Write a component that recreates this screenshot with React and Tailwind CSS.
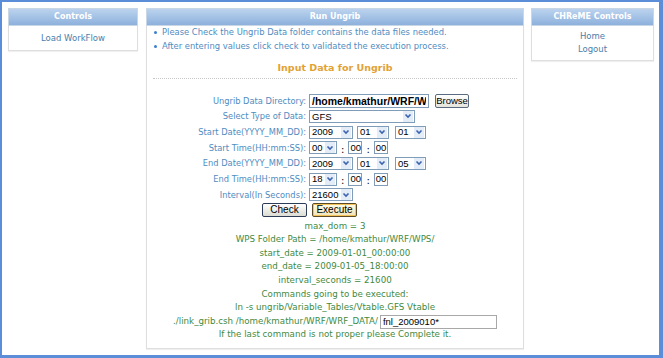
import React from 'react';

const font = { fontFamily: '"DejaVu Sans", Verdana, sans-serif' };

const Chevron = () => (
  <span className="flex items-center justify-center w-[10px] h-[11px] bg-[#e4ecf8] mr-[1px]">
    <svg width="8" height="8" viewBox="0 0 8 8">
      <path d="M1.5 2.5 L4 5 L6.5 2.5" fill="none" stroke="#3b63b0" strokeWidth="1.6" />
    </svg>
  </span>
);

function FakeSelect({ value, className }) {
  return (
    <span className={`inline-flex items-center justify-between h-[13px] border border-[#7f9db9] bg-white text-black text-[9.5px] font-['Liberation_Sans',Arial,sans-serif] ${className}`}>
      <span className="pl-[2px] leading-none">{value}</span>
      <Chevron />
    </span>
  );
}

function TinyInput({ value }) {
  return (
    <span className="inline-flex items-center h-[13px] w-[14px] border border-[#7f9db9] bg-white text-black text-[9.5px] font-['Liberation_Sans',Arial,sans-serif] pl-[1px] leading-none">
      {value}
    </span>
  );
}

const Colon = () => <span className="text-black text-[10px] leading-none">:</span>;

function Panel({ title, className, children }) {
  return (
    <div className={`flex flex-col ${className}`}>
      <div className="h-[18px] flex items-center justify-center bg-gradient-to-b from-[#bcd3ee] to-[#8db1dc] text-white font-bold text-[8px] border border-[#c8d6e6]">
        {title}
      </div>
      <div className="border-x border-b border-[#dedede] bg-white shadow-[0_1px_1px_rgba(0,0,0,0.06)]">
        {children}
      </div>
    </div>
  );
}

function FormRow({ label, children }) {
  return (
    <div className="flex items-center h-[15.67px]">
      <div className="w-[162px] pr-[3px] text-right text-[#4f8cbf] text-[8.3px] leading-none whitespace-nowrap">{label}</div>
      <div className="flex items-center">{children}</div>
    </div>
  );
}

const outputs = [
  'max_dom = 3',
  'WPS Folder Path = /home/kmathur/WRF/WPS/',
  'start_date = 2009-01-01_00:00:00',
  'end_date = 2009-01-05_18:00:00',
  'interval_seconds = 21600',
  'Commands going to be executed:',
  'ln -s ungrib/Variable_Tables/Vtable.GFS Vtable',
];

export default function App() {
  return (
    <div style={font} className="w-[663px] h-[358px] bg-[#5b8dd9] pl-[2px] pt-[2px] pr-[4px] pb-[3px]">
      <div className="h-full bg-white flex items-start pl-[6px] pt-[6px] pr-[5px]">
        <Panel title="Controls" className="w-[130px]">
          <div className="h-[24px] flex items-center justify-center text-[8.5px] text-[#4b7eab]">Load WorkFlow</div>
        </Panel>

        <Panel title="Run Ungrib" className="w-[378px] ml-[8px]">
          <div className="h-[322px]">
            <ul className="text-[8.4px] text-[#4f8cbf] leading-[13.5px] whitespace-nowrap">
              <li className="flex items-center pl-[7px] gap-[5px]">
                <span className="w-[3px] h-[3px] rounded-full bg-[#3c7fd0]" />
                Please Check the Ungrib Data folder contains the data files needed.
              </li>
              <li className="flex items-center pl-[7px] gap-[5px]">
                <span className="w-[3px] h-[3px] rounded-full bg-[#3c7fd0]" />
                After entering values click check to validated the execution process.
              </li>
            </ul>
            <div className="mt-[8px] mx-[6px] pb-[3px] border-b border-dotted border-[#c8c8c8] text-center font-bold text-[9.5px] leading-[14px] text-[#e2a233]">
              Input Data for Ungrib
            </div>

            <div className="mt-[14px]">
              <FormRow label="Ungrib Data Directory:">
                <input
                  readOnly
                  value="/home/kmathur/WRF/WRF_DATA/"
                  className="h-[14px] w-[120px] border border-[#7f9db9] bg-white text-black font-bold text-[10.5px] font-['Liberation_Sans',Arial,sans-serif] px-[2px] leading-none outline-none"
                />
                <button className="ml-[6px] h-[14px] w-[34px] border border-[#5a6a80] rounded-[2px] bg-gradient-to-b from-[#ffffff] to-[#e4e4dc] text-black text-[9.5px] font-['Liberation_Sans',Arial,sans-serif] leading-none">
                  Browse
                </button>
              </FormRow>
              <FormRow label="Select Type of Data:">
                <FakeSelect value="GFS" className="w-[106px]" />
              </FormRow>
              <FormRow label="Start Date(YYYY_MM_DD):">
                <FakeSelect value="2009" className="w-[44px]" />
                <FakeSelect value="01" className="w-[32px] ml-[4px]" />
                <FakeSelect value="01" className="w-[31px] ml-[6px]" />
              </FormRow>
              <FormRow label="Start Time(HH:mm:SS):">
                <FakeSelect value="00" className="w-[28px]" />
                <span className="mx-[4px]"><Colon /></span>
                <TinyInput value="00" />
                <span className="mx-[4px]"><Colon /></span>
                <TinyInput value="00" />
              </FormRow>
              <FormRow label="End Date(YYYY_MM_DD):">
                <FakeSelect value="2009" className="w-[44px]" />
                <FakeSelect value="01" className="w-[32px] ml-[4px]" />
                <FakeSelect value="05" className="w-[31px] ml-[6px]" />
              </FormRow>
              <FormRow label="End Time(HH:mm:SS):">
                <FakeSelect value="18" className="w-[28px]" />
                <span className="mx-[4px]"><Colon /></span>
                <TinyInput value="00" />
                <span className="mx-[4px]"><Colon /></span>
                <TinyInput value="00" />
              </FormRow>
              <FormRow label="Interval(In Seconds):">
                <FakeSelect value="21600" className="w-[44px]" />
              </FormRow>

              <div className="flex items-center h-[14px] pl-[115px] gap-[5px] font-['Liberation_Sans',Arial,sans-serif] text-[10px] text-black">
                <button className="h-[14px] w-[45px] border border-[#2b3b58] rounded-[2px] bg-gradient-to-b from-[#ffffff] to-[#dcdcd4] leading-none">
                  Check
                </button>
                <button className="h-[14px] w-[45px] border border-[#5a4a28] rounded-[2px] bg-gradient-to-b from-[#fffbe8] to-[#efe3b8] shadow-[inset_0_0_0_1px_#f3c45a] leading-none">
                  Execute
                </button>
              </div>

              <div className="mt-[3px] text-center text-[8.7px] leading-[13.6px] text-[#3f8a3f]">
                {outputs.map((line) => (
                  <div key={line}>{line}</div>
                ))}
                <div className="flex items-center justify-center gap-[2px] h-[13.6px]">
                  <span>./link_grib.csh /home/kmathur/WRF/WRF_DATA/</span>
                  <span className="inline-flex items-center h-[14px] w-[117px] border border-[#a8a8a8] bg-white text-black text-[9.5px] font-['Liberation_Sans',Arial,sans-serif] pl-[2px] leading-none">
                    fnl_2009010*
                  </span>
                </div>
                <div>If the last command is not proper please Complete it.</div>
              </div>
            </div>
          </div>
        </Panel>

        <Panel title="CHReME Controls" className="w-[123px] ml-[7px]">
          <div className="h-[34px] flex flex-col items-center justify-center text-[8.5px] leading-[13px] text-[#4b7eab]">
            <span>Home</span>
            <span>Logout</span>
          </div>
        </Panel>
      </div>
    </div>
  );
}
